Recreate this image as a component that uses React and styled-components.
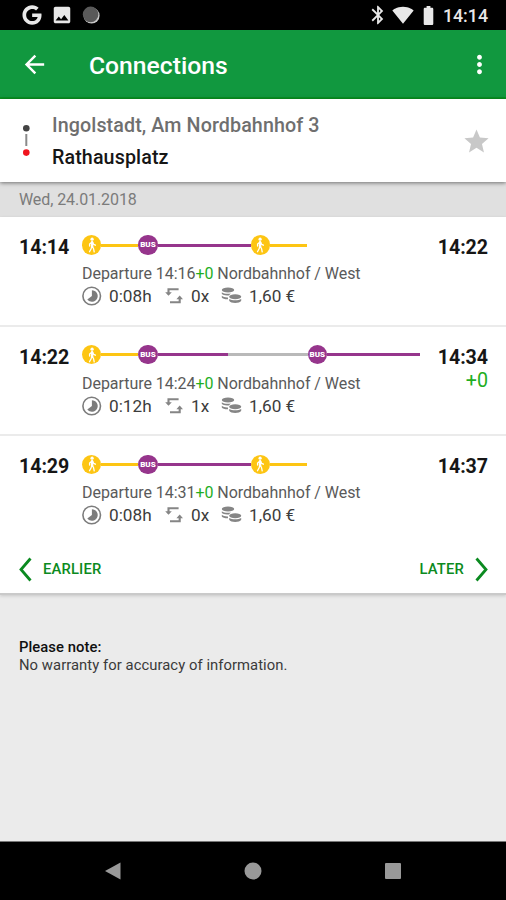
import React from "react";
import styled, { createGlobalStyle } from "styled-components";
import { FaGoogle } from "react-icons/fa";
import {
  MdArrowBack,
  MdBatteryFull,
  MdBluetooth,
  MdImage,
  MdMoreVert,
  MdSignalWifi4Bar,
  MdStar,
} from "react-icons/md";

const GlobalStyle = createGlobalStyle`
  * {
    box-sizing: border-box;
  }

  body {
    margin: 0;
    font-family: Roboto, "Liberation Sans", sans-serif;
    background-color: #ebebeb;
  }

  svg {
    display: block;
    flex-shrink: 0;
  }
`;

const Screen = styled.div`
  width: 506px;
  height: 900px;
  display: flex;
  flex-direction: column;
  overflow: hidden;
  background-color: #ebebeb;
`;

// Android status bar
const StatusBar = styled.div`
  height: 30px;
  padding: 0 18px 0 22px;
  display: flex;
  justify-content: space-between;
  align-items: center;
  background-color: #000;
  color: #e8e8e8;
`;

const StatusGroup = styled.div`
  display: flex;
  align-items: center;
  gap: ${(props) => props.$gap}px;
`;

const Clock = styled.span`
  padding-top: 2px;
  font-size: 17.8px;
  font-weight: 500;
  line-height: 22px;
`;

// Green app bar
const AppBar = styled.header`
  height: 69px;
  padding: 2px 12px 0 20px;
  display: flex;
  align-items: center;
  background-color: #11983f;
  border-bottom: 2px solid #089322;
  color: #fff;
`;

const Title = styled.h1`
  flex: 1;
  margin: 2px 0 0 40px;
  font-size: 24.7px;
  font-weight: 500;
  line-height: 30px;
`;

// Start and destination
const RouteHeader = styled.section`
  position: relative;
  height: 83px;
  padding: 1px 15px 0 20px;
  display: flex;
  align-items: center;
  background-color: #fff;
  box-shadow: 0 1px 4px rgba(0, 0, 0, 0.5);
`;

const StopList = styled.div`
  flex: 1;
  margin: 1px 0 0 19px;
`;

const StopName = styled.div`
  font-size: 19.7px;
  font-weight: 500;
  line-height: 32px;
  letter-spacing: 0.1px;
  color: ${(props) => (props.$from ? "#6f6f6f" : "#161616")};
`;

const DateBar = styled.div`
  height: 35px;
  padding: 2px 19px 0;
  font-size: 16px;
  line-height: 32px;
  letter-spacing: -0.08px;
  background-color: #e0e0e0;
  color: #7b7b7b;
`;

const Results = styled.main`
  background-color: #fff;
  border-bottom: 2px solid #cacaca;
  box-shadow: 0 1px 3px rgba(0, 0, 0, 0.15);
`;

const Row = styled.article`
  height: 109.6px;
  padding: 19px 18px 0 19px;
  display: flex;
  border-bottom: ${(props) => (props.$last ? "none" : "2px solid #ebebeb")};
`;

const Time = styled.div`
  width: 63px;
  font-size: 19.6px;
  font-weight: 700;
  line-height: 23px;
  letter-spacing: -0.05px;
  color: #161616;
`;

const Arrival = styled(Time)`
  width: 68px;
  text-align: right;
`;

const Delay = styled.div`
  font-size: 19.7px;
  font-weight: 400;
  color: #1fae1f;
`;

const Details = styled.div`
  flex: 1;
  min-width: 0;
`;

const Track = styled.div`
  height: 20px;
  margin-top: -1px;
  display: flex;
  align-items: center;
`;

const Node = styled.div`
  width: 19.3px;
  height: 19.3px;
  flex-shrink: 0;
  display: flex;
  justify-content: center;
  align-items: center;
  border-radius: 50%;
  font-size: 8px;
  font-weight: 900;
  color: #fff;
  background-color: ${(props) => props.$color};
`;

const Segment = styled.div`
  width: ${(props) => props.$width}px;
  height: 3px;
  flex-shrink: 0;
  background-color: ${(props) => props.$color};
`;

const Departure = styled.div`
  margin-top: 9px;
  font-size: 16px;
  line-height: 20px;
  letter-spacing: -0.05px;
  white-space: nowrap;
  color: #5a5a5a;
`;

const OnTime = styled.span`
  color: #1fae1f;
`;

const Facts = styled.div`
  margin-top: 1px;
  height: 22px;
  display: flex;
  align-items: center;
  font-size: 17.2px;
  line-height: 22px;
  color: #3c3c3c;
`;

const Fact = styled.span`
  width: ${(props) => props.$width}px;
  margin-left: ${(props) => props.$gap}px;
`;

const Pager = styled.nav`
  height: 47px;
  padding: 0 18px 0 19px;
  display: flex;
  justify-content: space-between;
  align-items: center;
  color: #0b8a20;
`;

const PagerButton = styled.button`
  padding: 0;
  display: flex;
  align-items: center;
  gap: 11px;
  border: none;
  background: none;
  font-family: inherit;
  font-size: 14.8px;
  font-weight: 500;
  letter-spacing: 0.15px;
  color: inherit;
  cursor: pointer;
`;

const Note = styled.footer`
  flex: 1;
  padding: 43px 19px 0;
  font-size: 14.8px;
  line-height: 18px;
  letter-spacing: 0.06px;
  color: #3a3a3a;
`;

const NoteTitle = styled.div`
  font-weight: 500;
  color: #101010;
`;

const NavBar = styled.div`
  height: 59px;
  border-top: 1px solid #777;
  display: flex;
  justify-content: center;
  align-items: center;
  gap: 122px;
  background-color: #000;
`;

const YELLOW = "#fdc513";
const PURPLE = "#96358c";
const GREY = "#b9b9b9";

const shortTrip = [
  { node: "walk" },
  { width: 37, color: YELLOW },
  { node: "bus" },
  { width: 93, color: PURPLE },
  { node: "walk" },
  { width: 37, color: YELLOW },
];

const transferTrip = [
  { node: "walk" },
  { width: 37, color: YELLOW },
  { node: "bus" },
  { width: 70, color: PURPLE },
  { width: 80, color: GREY },
  { node: "bus" },
  { width: 93, color: PURPLE },
];

const connections = [
  { start: "14:14", end: "14:22", departure: "14:16", duration: "0:08h", changes: "0x", track: shortTrip },
  { start: "14:22", end: "14:34", delay: "+0", departure: "14:24", duration: "0:12h", changes: "1x", track: transferTrip },
  { start: "14:29", end: "14:37", departure: "14:31", duration: "0:08h", changes: "0x", track: shortTrip },
];

const MoonIcon = () => (
  <svg width="18" height="18" viewBox="0 0 18 18">
    <circle cx="9.6" cy="9.6" r="8" fill="#c9c9c9" />
    <circle cx="8.6" cy="8.4" r="7.8" fill="#595959" />
  </svg>
);

const RouteIcon = () => (
  <svg width="13" height="34" viewBox="0 0 13 34">
    <circle cx="6.3" cy="4.2" r="3.3" fill="#444" />
    <path d="M6.3 10v12" stroke="#8a8a8a" strokeWidth="2" />
    <circle cx="6.3" cy="28.6" r="3.3" fill="#f0141e" />
  </svg>
);

const WalkIcon = () => (
  <svg width="12" height="16" viewBox="0 0 12 16">
    <circle cx="6.1" cy="2.2" r="1.6" fill="#fff" />
    <path
      d="M6 4.8v5M6 5.2L3.6 7v2M6.4 5.2l1.3 2.2 1.7 0.8M5.8 9.5l-0.8 2.5-1.5 2.8M6.4 9.5l1.2 2.3 0.6 3"
      fill="none"
      stroke="#fff"
      strokeWidth="1.3"
      strokeLinecap="round"
      strokeLinejoin="round"
    />
    <path d="M6.1 5.2v4.5" stroke="#fff" strokeWidth="2.4" strokeLinecap="round" />
  </svg>
);

const DurationIcon = () => (
  <svg width="20" height="20" viewBox="0 0 20 20">
    <circle cx="9.7" cy="10" r="8.8" fill="none" stroke="#7c7c7c" strokeWidth="1.6" />
    <path d="M9.9 4.2a5.8 5.8 0 1 1-4.6 9.3L9.9 10z" fill="#7c7c7c" />
  </svg>
);

const ChangeIcon = () => (
  <svg width="18" height="18" viewBox="0 0 18 18">
    <path d="M13.6 2.2H3.5v5M5 15.2h9.7v-5" fill="none" stroke="#858585" strokeWidth="2.1" />
    <path d="M0.2 5.2h6.6L3.5 8.8zM11.4 12.2H18L14.7 8.6z" fill="#858585" />
  </svg>
);

const CoinsIcon = () => (
  <svg width="21" height="18" viewBox="0 0 21 18">
    <g fill="#858585">
      <ellipse cx="7" cy="3" rx="6.2" ry="2.5" />
      <ellipse cx="14.2" cy="9.8" rx="6" ry="2.5" />
      <path d="M0.8 5.2c1.8 1.7 6 2 9 1.3l-2 1.9C4.6 8.8 1.6 8 0.8 6.8z" />
      <path d="M0.8 8.8c1.5 1.3 3.5 1.7 6.2 1.6v1.8C4 12.3 1.5 11.5 0.8 10.4z" />
      <path d="M8.2 12c2.5 1.7 9.5 1.7 12 0v1.7c-1.5 3-10.5 3-12 0z" />
    </g>
  </svg>
);

const Chevron = ({ right }) => (
  <svg width="13" height="25" viewBox="0 0 13 25">
    <path
      d={right ? "M1.5 1.5l9.5 11-9.5 11" : "M11.5 1.5l-9.5 11 9.5 11"}
      fill="none"
      stroke="currentColor"
      strokeWidth="2.8"
    />
  </svg>
);

function TrackPart({ part }) {
  if (part.node === "walk") {
    return (
      <Node $color={YELLOW}>
        <WalkIcon />
      </Node>
    );
  }
  if (part.node === "bus") {
    return <Node $color={PURPLE}>BUS</Node>;
  }
  return <Segment $width={part.width} $color={part.color} />;
}

function Connection({ item, last }) {
  return (
    <Row $last={last}>
      <Time>{item.start}</Time>
      <Details>
        <Track>
          {item.track.map((part, index) => (
            <TrackPart key={index} part={part} />
          ))}
        </Track>
        <Departure>
          Departure {item.departure}
          <OnTime>+0</OnTime> Nordbahnhof / West
        </Departure>
        <Facts>
          <DurationIcon />
          <Fact $gap={7} $width={56}>
            {item.duration}
          </Fact>
          <ChangeIcon />
          <Fact $gap={8} $width={30}>
            {item.changes}
          </Fact>
          <CoinsIcon />
          <Fact $gap={7}>1,60 €</Fact>
        </Facts>
      </Details>
      <Arrival>
        {item.end}
        {item.delay && <Delay>{item.delay}</Delay>}
      </Arrival>
    </Row>
  );
}

function App() {
  return (
    <Screen>
      <GlobalStyle />
      <StatusBar>
        <StatusGroup $gap={9}>
          <FaGoogle size={20} />
          <MdImage size={22} />
          <MoonIcon />
        </StatusGroup>
        <StatusGroup $gap={3}>
          <MdBluetooth size={22} />
          <MdSignalWifi4Bar size={22} />
          <MdBatteryFull size={23} />
          <Clock>14:14</Clock>
        </StatusGroup>
      </StatusBar>
      <AppBar>
        <MdArrowBack size={29} />
        <Title>Connections</Title>
        <MdMoreVert size={29} />
      </AppBar>
      <RouteHeader>
        <RouteIcon />
        <StopList>
          <StopName $from>Ingolstadt, Am Nordbahnhof 3</StopName>
          <StopName>Rathausplatz</StopName>
        </StopList>
        <MdStar size={29} color="#c8c8c8" />
      </RouteHeader>
      <DateBar>Wed, 24.01.2018</DateBar>
      <Results>
        {connections.map((item, index) => (
          <Connection key={item.start} item={item} last={index === connections.length - 1} />
        ))}
        <Pager>
          <PagerButton>
            <Chevron />
            EARLIER
          </PagerButton>
          <PagerButton>
            LATER
            <Chevron right />
          </PagerButton>
        </Pager>
      </Results>
      <Note>
        <NoteTitle>Please note:</NoteTitle>
        No warranty for accuracy of information.
      </Note>
      <NavBar>
        <svg width="18" height="18" viewBox="0 0 18 18">
          <path d="M1 9L16.5 0.5v17z" fill="#999" />
        </svg>
        <svg width="18" height="18" viewBox="0 0 18 18">
          <circle cx="9" cy="9" r="8.5" fill="#999" />
        </svg>
        <svg width="18" height="18" viewBox="0 0 18 18">
          <rect x="1" y="1" width="16" height="16" rx="1" fill="#999" />
        </svg>
      </NavBar>
    </Screen>
  );
}

export default App;
